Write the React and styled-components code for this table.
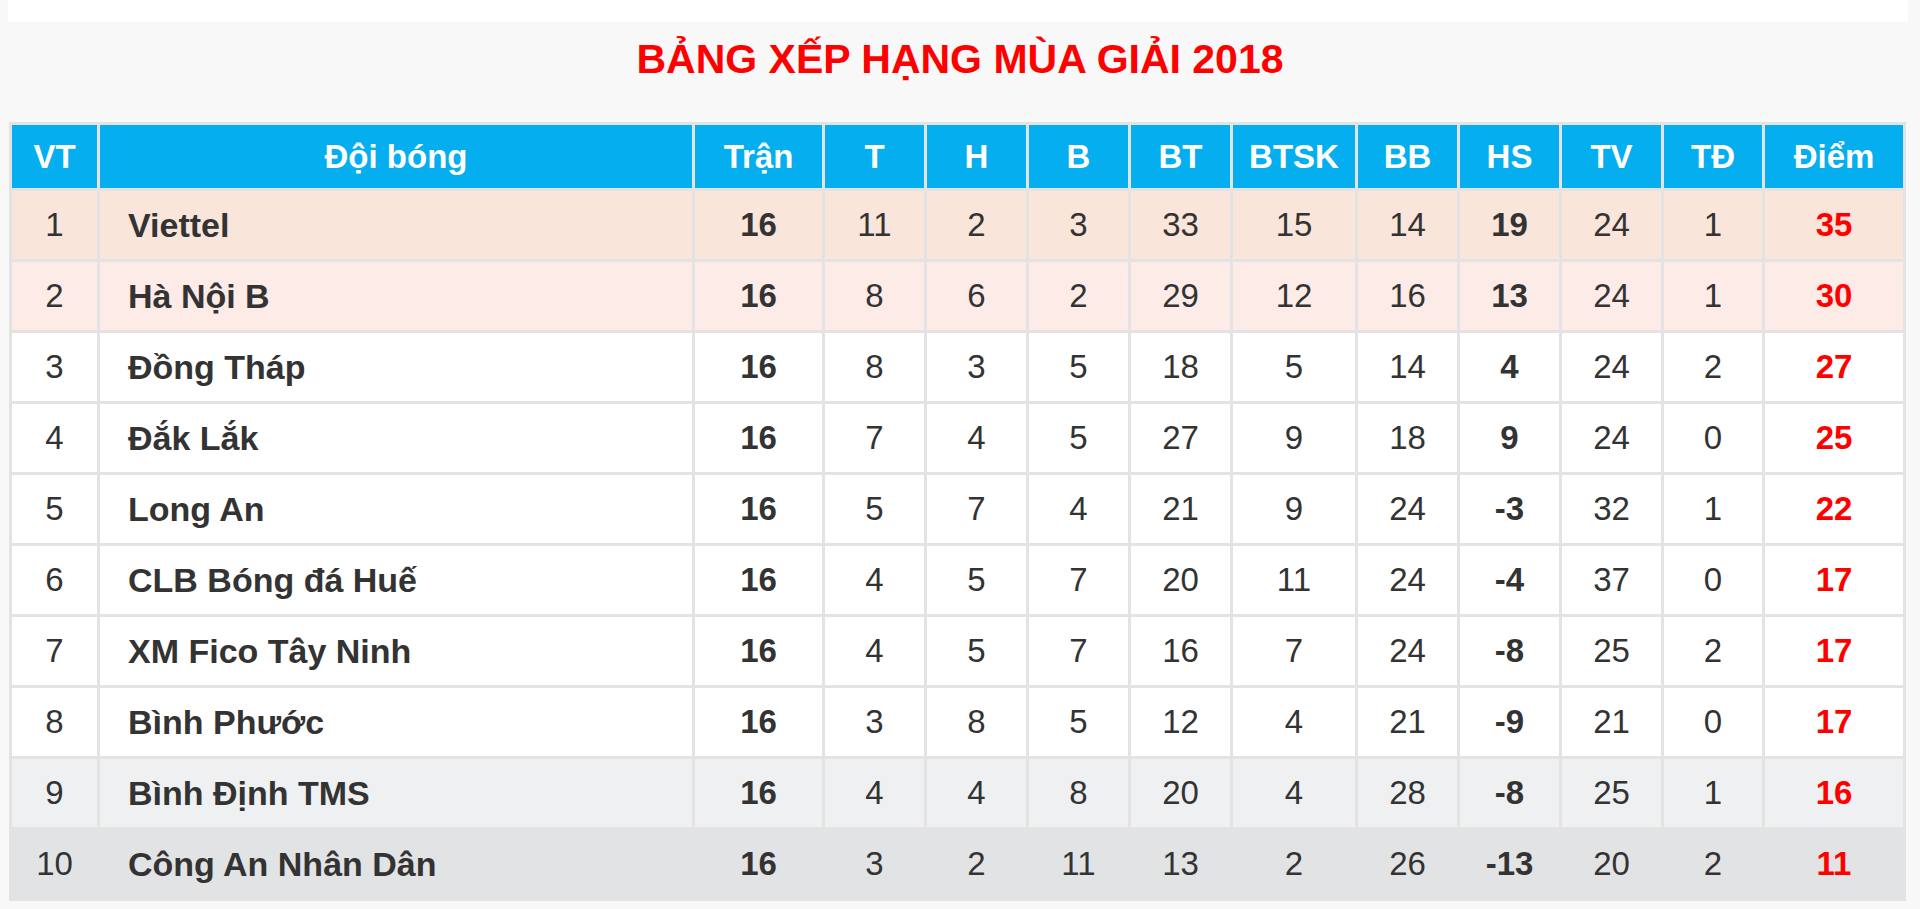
import styled, { createGlobalStyle } from 'styled-components';

const teams = [
  { vt: 1, name: 'Viettel', tran: 16, t: 11, h: 2, b: 3, bt: 33, btsk: 15, bb: 14, hs: 19, tv: 24, td: 1, diem: 35 },
  { vt: 2, name: 'Hà Nội B', tran: 16, t: 8, h: 6, b: 2, bt: 29, btsk: 12, bb: 16, hs: 13, tv: 24, td: 1, diem: 30 },
  { vt: 3, name: 'Đồng Tháp', tran: 16, t: 8, h: 3, b: 5, bt: 18, btsk: 5, bb: 14, hs: 4, tv: 24, td: 2, diem: 27 },
  { vt: 4, name: 'Đắk Lắk', tran: 16, t: 7, h: 4, b: 5, bt: 27, btsk: 9, bb: 18, hs: 9, tv: 24, td: 0, diem: 25 },
  { vt: 5, name: 'Long An', tran: 16, t: 5, h: 7, b: 4, bt: 21, btsk: 9, bb: 24, hs: -3, tv: 32, td: 1, diem: 22 },
  { vt: 6, name: 'CLB Bóng đá Huế', tran: 16, t: 4, h: 5, b: 7, bt: 20, btsk: 11, bb: 24, hs: -4, tv: 37, td: 0, diem: 17 },
  { vt: 7, name: 'XM Fico Tây Ninh', tran: 16, t: 4, h: 5, b: 7, bt: 16, btsk: 7, bb: 24, hs: -8, tv: 25, td: 2, diem: 17 },
  { vt: 8, name: 'Bình Phước', tran: 16, t: 3, h: 8, b: 5, bt: 12, btsk: 4, bb: 21, hs: -9, tv: 21, td: 0, diem: 17 },
  { vt: 9, name: 'Bình Định TMS', tran: 16, t: 4, h: 4, b: 8, bt: 20, btsk: 4, bb: 28, hs: -8, tv: 25, td: 1, diem: 16 },
  { vt: 10, name: 'Công An Nhân Dân', tran: 16, t: 3, h: 2, b: 11, bt: 13, btsk: 2, bb: 26, hs: -13, tv: 20, td: 2, diem: 11 },
];

const columns = [
  { label: 'VT', width: 85 },
  { label: 'Đội bóng', width: 592 },
  { label: 'Trận', width: 127 },
  { label: 'T', width: 99 },
  { label: 'H', width: 99 },
  { label: 'B', width: 99 },
  { label: 'BT', width: 99 },
  { label: 'BTSK', width: 122 },
  { label: 'BB', width: 99 },
  { label: 'HS', width: 99 },
  { label: 'TV', width: 99 },
  { label: 'TĐ', width: 98 },
  { label: 'Điểm', width: 138 },
];

const rowColors = {
  1: '#f9e5da',
  2: '#fdebe8',
  9: '#eff0f2',
  10: '#e2e3e5',
};

function App() {
  return (
    <Page>
      <GlobalStyle />
      <TopStrip />
      <Title>BẢNG XẾP HẠNG MÙA GIẢI 2018</Title>
      <Table>
        <colgroup>
          {columns.map((c) => (
            <col key={c.label} style={{ width: c.width }} />
          ))}
        </colgroup>
        <thead>
          <tr>
            {columns.map((c) => (
              <Th key={c.label}>{c.label}</Th>
            ))}
          </tr>
        </thead>
        <tbody>
          {teams.map((r) => (
            <Row key={r.vt} $bg={rowColors[r.vt] || '#ffffff'}>
              <Td>{r.vt}</Td>
              <TeamCell>{r.name}</TeamCell>
              <Td $bold>{r.tran}</Td>
              <Td>{r.t}</Td>
              <Td>{r.h}</Td>
              <Td>{r.b}</Td>
              <Td>{r.bt}</Td>
              <Td>{r.btsk}</Td>
              <Td>{r.bb}</Td>
              <Td $bold>{r.hs}</Td>
              <Td>{r.tv}</Td>
              <Td>{r.td}</Td>
              <Td $bold $red>{r.diem}</Td>
            </Row>
          ))}
        </tbody>
      </Table>
    </Page>
  );
}

const GlobalStyle = createGlobalStyle`
  html, body {
    margin: 0;
    padding: 0;
    background: #f8f8f8;
  }
  body {
    font-family: "Liberation Sans", Arial, sans-serif;
  }
`;

const Page = styled.div`
  width: 1920px;
  height: 909px;
  overflow: hidden;
  background: #f8f8f8;
`;

const TopStrip = styled.div`
  margin: 0 12px 0 8px;
  height: 22px;
  background: #ffffff;
`;

const Title = styled.h1`
  margin: 0;
  padding: 17px 0 43px;
  font-size: 41px;
  line-height: 40px;
  height: 40px;
  font-weight: 700;
  color: #ff0000;
  text-align: center;
`;

const Table = styled.table`
  margin-left: 9px;
  width: 1897px;
  table-layout: fixed;
  border-collapse: separate;
  border-spacing: 3px;
  background: #e3e3e3;
  font-size: 33px;
  color: #333333;
`;

const Th = styled.th`
  height: 63px;
  padding: 0;
  background: #05aeef;
  color: #ffffff;
  font-weight: 700;
  text-align: center;
  vertical-align: middle;
`;

const Row = styled.tr`
  background: ${(p) => p.$bg};
`;

const Td = styled.td`
  height: 68px;
  padding: 0;
  text-align: center;
  vertical-align: middle;
  font-weight: ${(p) => (p.$bold ? 700 : 400)};
  color: ${(p) => (p.$red ? '#ff0000' : '#333333')};
`;

const TeamCell = styled(Td)`
  text-align: left;
  padding-left: 28px;
  font-size: 34px;
  font-weight: 700;
`;

export default App;
